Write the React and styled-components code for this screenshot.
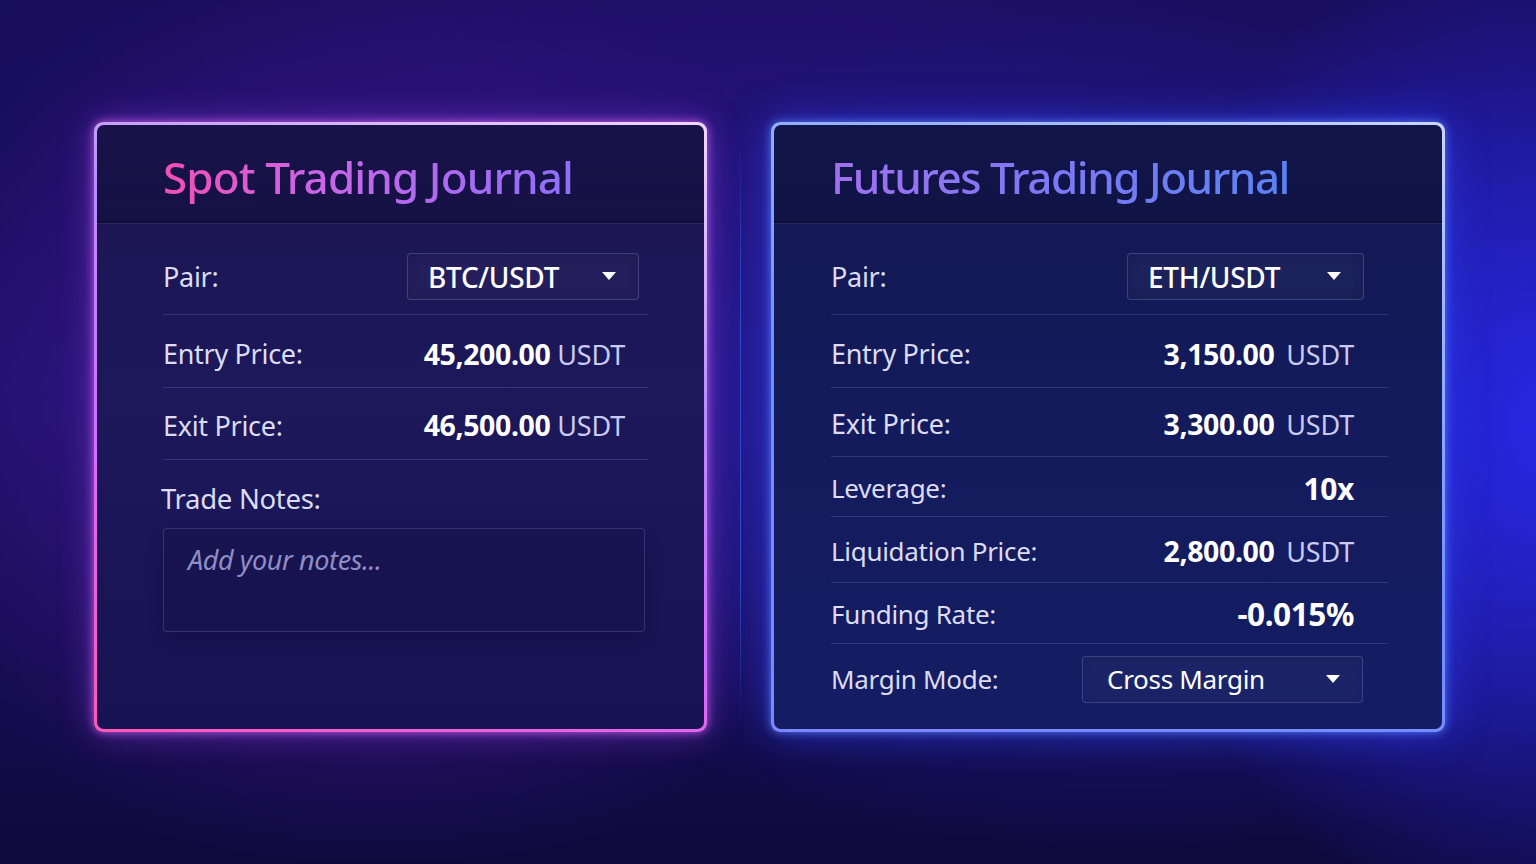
import React from 'react';
import styled, { createGlobalStyle } from 'styled-components';

const Global = createGlobalStyle`
  html, body { margin: 0; padding: 0; }
  body {
    width: 1536px;
    height: 864px;
    overflow: hidden;
    font-family: "Noto Sans", "Open Sans", sans-serif;
    background: #120b45;
  }
`;

const Page = styled.div`
  width: 1536px;
  height: 864px;
  box-sizing: border-box;
  padding: 122px 0 0 94px;
  display: flex;
  align-items: flex-start;
  background:
    radial-gradient(ellipse 420px 520px at 1560px 430px, rgba(40, 40, 235, 0.95), rgba(40, 40, 235, 0) 100%),
    radial-gradient(ellipse 700px 420px at 1120px 430px, rgba(30, 40, 190, 0.7), rgba(30, 40, 190, 0) 100%),
    radial-gradient(ellipse 520px 460px at 380px 420px, rgba(90, 30, 175, 0.6), rgba(90, 30, 175, 0) 100%),
    radial-gradient(ellipse 900px 300px at 768px 80px, rgba(40, 20, 130, 0.6), rgba(40, 20, 130, 0) 100%),
    linear-gradient(180deg, #170c55 0%, #1a1068 45%, #140c4e 80%, #0e0a3c 100%);
`;

const Frame = styled.div`
  width: ${p => p.$w}px;
  height: 610px;
  box-sizing: border-box;
  padding: 3px;
  border-radius: 9px;
  flex-shrink: 0;
  background: ${p => p.$border};
  box-shadow: ${p => p.$glow};
`;

const Card = styled.div`
  height: 100%;
  border-radius: 7px;
  background: ${p => p.$bg};
  display: flex;
  flex-direction: column;
  overflow: hidden;
`;

const Header = styled.div`
  height: 98px;
  box-sizing: border-box;
  padding-left: ${p => p.$pad}px;
  display: flex;
  align-items: center;
  border-bottom: 2px solid rgba(6, 6, 30, 0.55);
  box-shadow: 0 1px 0 rgba(160, 160, 255, 0.12);
  background: linear-gradient(180deg, rgba(10, 8, 40, 0.2), rgba(10, 8, 40, 0.35));
`;

const Title = styled.h1`
  margin: 0;
  padding-top: 8px;
  font-size: 44px;
  font-weight: 500;
  letter-spacing: ${p => p.$ls}px;
  background: ${p => p.$grad};
  -webkit-background-clip: text;
  background-clip: text;
  color: transparent;
`;

const Body = styled.div`
  padding: 16px ${p => p.$right}px 0 ${p => p.$left}px;
  display: flex;
  flex-direction: column;
`;

const Row = styled.div`
  height: ${p => p.$h}px;
  box-sizing: border-box;
  display: flex;
  align-items: center;
  justify-content: space-between;
  border-bottom: ${p => (p.$last ? 'none' : '1.5px solid rgba(150, 150, 230, 0.22)')};
  padding: ${p => p.$pt || 0}px ${p => p.$vr}px 0 0;
`;

const Label = styled.span`
  font-size: ${p => p.$size || 27}px;
  color: #dcdcf4;
  letter-spacing: -0.3px;
`;

const Value = styled.span`
  display: flex;
  align-items: baseline;
  gap: ${p => p.$gap || 7}px;
  color: #ffffff;
`;

const Num = styled.b`
  font-size: ${p => p.$size || 28.5}px;
  font-weight: 700;
  letter-spacing: -0.4px;
`;

const Unit = styled.span`
  font-size: 27px;
  color: #c9cbf2;
  letter-spacing: -0.2px;
`;

const Select = styled.div`
  width: ${p => p.$w}px;
  height: 47px;
  box-sizing: border-box;
  padding: 0 22px 0 ${p => p.$pl}px;
  margin-right: ${p => p.$mr}px;
  display: flex;
  align-items: center;
  justify-content: space-between;
  border: 1.5px solid rgba(140, 150, 230, 0.28);
  border-radius: 4px;
  background: rgba(255, 255, 255, 0.035);
  box-shadow: inset 0 0 12px rgba(0, 0, 0, 0.15);
  color: #ffffff;
  font-size: ${p => p.$size}px;
  font-weight: ${p => p.$weight || 500};
  letter-spacing: -0.3px;
`;

const NotesLabel = styled.div`
  margin: 20px 0 0 -2px;
  font-size: 27.5px;
  color: #dcdcf4;
  letter-spacing: -0.3px;
`;

const Notes = styled.div`
  width: 482px;
  height: 104px;
  box-sizing: border-box;
  margin-top: 11px;
  padding: 12px 24px;
  border: 1.5px solid rgba(140, 150, 230, 0.25);
  border-radius: 4px;
  background: rgba(20, 16, 70, 0.35);
  box-shadow: 0 6px 16px rgba(5, 5, 30, 0.25);
  font-size: 27px;
  font-style: italic;
  color: #8f8dc4;
  letter-spacing: -0.4px;
`;

const Separator = styled.div`
  width: 1px;
  height: 600px;
  margin: 6px 30px 0 33px;
  flex-shrink: 0;
  background: linear-gradient(180deg, rgba(60, 120, 255, 0) 0%, rgba(60, 120, 255, 0.55) 30%, rgba(60, 120, 255, 0.55) 75%, rgba(60, 120, 255, 0) 100%);
`;

const Caret = () => (
  <svg width="14" height="9" viewBox="0 0 14 9">
    <polygon points="0,0 14,0 7,8" fill="#ffffff" />
  </svg>
);

export default function App() {
  return (
    <Page>
      <Global />
      <Frame
        $w={613}
        $border="linear-gradient(20deg, #ff58b4 0%, #d46cff 35%, #b78cff 65%, #f3d8ff 100%)"
        $glow="0 0 10px rgba(230, 110, 255, 0.75), 0 0 34px rgba(170, 70, 255, 0.45)"
      >
        <Card $bg="linear-gradient(180deg, #1b1550 0%, #1c185a 45%, #181352 100%)">
          <Header $pad={66}>
            <Title $ls={-0.9} $grad="linear-gradient(90deg, #f24fb5 0%, #c866e8 40%, #8d6ff8 100%)">Spot Trading Journal</Title>
          </Header>
          <Body $left={66} $right={56}>
            <Row $h={76} $vr={0}>
              <Label>Pair:</Label>
              <Select $w={232} $pl={20} $mr={9} $size={28}>
                BTC/USDT
                <Caret />
              </Select>
            </Row>
            <Row $h={73} $vr={23} $pt={5}>
              <Label>Entry Price:</Label>
              <Value>
                <Num>45,200.00</Num>
                <Unit>USDT</Unit>
              </Value>
            </Row>
            <Row $h={72} $vr={23} $pt={3}>
              <Label>Exit Price:</Label>
              <Value>
                <Num>46,500.00</Num>
                <Unit>USDT</Unit>
              </Value>
            </Row>
            <NotesLabel>Trade Notes:</NotesLabel>
            <Notes>Add your notes...</Notes>
          </Body>
        </Card>
      </Frame>

      <Separator />

      <Frame
        $w={674}
        $border="linear-gradient(20deg, #7f86ff 0%, #6f90ff 45%, #9fb8ff 80%, #c9d6ff 100%)"
        $glow="0 0 10px rgba(90, 130, 255, 0.85), 0 0 40px rgba(50, 70, 255, 0.6)"
      >
        <Card $bg="linear-gradient(180deg, #131850 0%, #141b5c 50%, #141d64 100%)">
          <Header $pad={57}>
            <Title $ls={-1.5} $grad="linear-gradient(90deg, #a070ee 0%, #7f78f4 45%, #5b82f3 100%)">Futures Trading Journal</Title>
          </Header>
          <Body $left={57} $right={54}>
            <Row $h={76} $vr={0}>
              <Label>Pair:</Label>
              <Select $w={237} $pl={20} $mr={24} $size={28}>
                ETH/USDT
                <Caret />
              </Select>
            </Row>
            <Row $h={73} $vr={34} $pt={5}>
              <Label>Entry Price:</Label>
              <Value $gap={12}>
                <Num>3,150.00</Num>
                <Unit>USDT</Unit>
              </Value>
            </Row>
            <Row $h={69} $vr={34} $pt={3}>
              <Label>Exit Price:</Label>
              <Value $gap={12}>
                <Num>3,300.00</Num>
                <Unit>USDT</Unit>
              </Value>
            </Row>
            <Row $h={60} $vr={34} $pt={3}>
              <Label $size={26}>Leverage:</Label>
              <Value>
                <Num $size={30}>10x</Num>
              </Value>
            </Row>
            <Row $h={66} $vr={34} $pt={3}>
              <Label $size={26}>Liquidation Price:</Label>
              <Value $gap={12}>
                <Num>2,800.00</Num>
                <Unit>USDT</Unit>
              </Value>
            </Row>
            <Row $h={61} $vr={34} $pt={1}>
              <Label $size={26}>Funding Rate:</Label>
              <Value>
                <Num $size={31.5}>-0.015%</Num>
              </Value>
            </Row>
            <Row $h={70} $vr={0} $last>
              <Label $size={26}>Margin Mode:</Label>
              <Select $w={281} $pl={24} $mr={25} $weight={400} $size={26}>
                Cross Margin
                <Caret />
              </Select>
            </Row>
          </Body>
        </Card>
      </Frame>
    </Page>
  );
}
